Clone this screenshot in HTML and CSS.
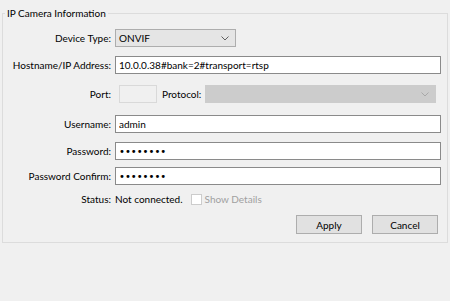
FILE: index.html
```html
<!DOCTYPE html>
<html lang="en">
<head>
    <meta charset="UTF-8">
    <title>IP Camera Information</title>
    <link rel="stylesheet" href="styles.css">
</head>
<body>
    <fieldset class="group">
        <legend>IP Camera Information</legend>
        <div class="form">
            <div class="row">
                <label class="label">Device Type:</label>
                <div class="field">
                    <div class="select">
                        <span>ONVIF</span>
                        <svg class="chevron" width="8" height="5" viewBox="0 0 8 5"><path d="M0.5 0.5 L4 4 L7.5 0.5" fill="none" stroke="#606060" stroke-width="1"/></svg>
                    </div>
                </div>
            </div>
            <div class="row">
                <label class="label">Hostname/IP Address:</label>
                <div class="field">
                    <input class="text" type="text" value="10.0.0.38#bank=2#transport=rtsp">
                </div>
            </div>
            <div class="row row-port">
                <label class="label">Port:</label>
                <div class="field">
                    <input class="text port" type="text" disabled>
                    <label class="label inline">Protocol:</label>
                    <div class="select select-off">
                        <span></span>
                        <svg class="chevron" width="8" height="5" viewBox="0 0 8 5"><path d="M0.5 0.5 L4 4 L7.5 0.5" fill="none" stroke="#a8a8a8" stroke-width="1"/></svg>
                    </div>
                </div>
            </div>
            <div class="row row-user">
                <label class="label">Username:</label>
                <div class="field">
                    <input class="text" type="text" value="admin">
                </div>
            </div>
            <div class="row">
                <label class="label">Password:</label>
                <div class="field">
                    <input class="text secret" type="password" value="password">
                </div>
            </div>
            <div class="row row-tight">
                <label class="label">Password Confirm:</label>
                <div class="field">
                    <input class="text secret" type="password" value="password">
                </div>
            </div>
            <div class="row row-status">
                <label class="label">Status:</label>
                <div class="field">
                    <span class="status">Not connected.</span>
                    <label class="check">
                        <input type="checkbox" disabled>
                        Show Details
                    </label>
                </div>
            </div>
            <div class="buttons">
                <button class="btn">Apply</button>
                <button class="btn">Cancel</button>
            </div>
        </div>
    </fieldset>
</body>
</html>
```

FILE: styles.css
```css
body {
    margin: 0;
    width: 450px;
    height: 301px;
    background-color: #f0f0f0;
    font-family: Lato, 'Noto Sans', sans-serif;
    font-size: 10px;
    color: #000;
    overflow: hidden;
}
.group {
    margin: 6px 2px 0 2px;
    padding: 0 6px 8px 0;
    border: 1px solid #dcdcdc;
    min-width: 0;
}
.group legend {
    margin-left: 2px;
    padding: 0 2px;
    line-height: 14px;
}
.form {
    display: flex;
    flex-direction: column;
    gap: 9px;
    padding-top: 9px;
}
.row {
    display: flex;
    align-items: center;
    height: 18px;
}
.row-port {
    margin-top: 2px;
}
.row-user {
    margin-top: 3px;
}
.row-tight {
    margin-top: -2px;
}
.row-status {
    height: 14px;
    margin-top: -2px;
}
.label {
    width: 108px;
    text-align: right;
    padding-right: 4px;
    flex-shrink: 0;
    white-space: nowrap;
}
.label.inline {
    width: auto;
    padding: 0 4px 0 5px;
}
.field {
    flex: 1;
    display: flex;
    align-items: center;
    height: 100%;
}
.text {
    box-sizing: border-box;
    width: 100%;
    height: 18px;
    margin: 0;
    padding: 0 3px;
    border: 1px solid #8a8a8a;
    background-color: #fff;
    font-family: inherit;
    font-size: 10px;
    color: #000;
    outline: none;
}
.text.port {
    width: 38px;
    margin-left: 4px;
    border-color: #d9d9d9;
    background-color: #f0f0f0;
}
.text.secret {
    font-family: 'DejaVu Sans', sans-serif;
    font-size: 10px;
    letter-spacing: 0;
}
.select {
    box-sizing: border-box;
    width: 121px;
    height: 18px;
    display: flex;
    align-items: center;
    justify-content: space-between;
    padding: 0 6px 0 3px;
    border: 1px solid #adadad;
    background-color: #e5e5e5;
}
.select-off {
    flex: 1;
    width: auto;
    margin-right: 5px;
    border-color: #cccccc;
    background-color: #cccccc;
}
.status {
    margin-right: 8px;
}
.check {
    display: flex;
    align-items: center;
    gap: 3px;
    color: #a0a0a0;
}
.check input {
    appearance: none;
    box-sizing: border-box;
    width: 11px;
    height: 11px;
    margin: 0;
    border: 1px solid #cccccc;
    background-color: #fff;
}
.buttons {
    display: flex;
    justify-content: flex-end;
    gap: 10px;
    margin-top: 0;
    padding-right: 3px;
}
.btn {
    box-sizing: border-box;
    width: 66px;
    height: 19px;
    padding: 0;
    border: 1px solid #adadad;
    background-color: #e1e1e1;
    font-family: inherit;
    font-size: 10px;
    color: #000;
}
```
